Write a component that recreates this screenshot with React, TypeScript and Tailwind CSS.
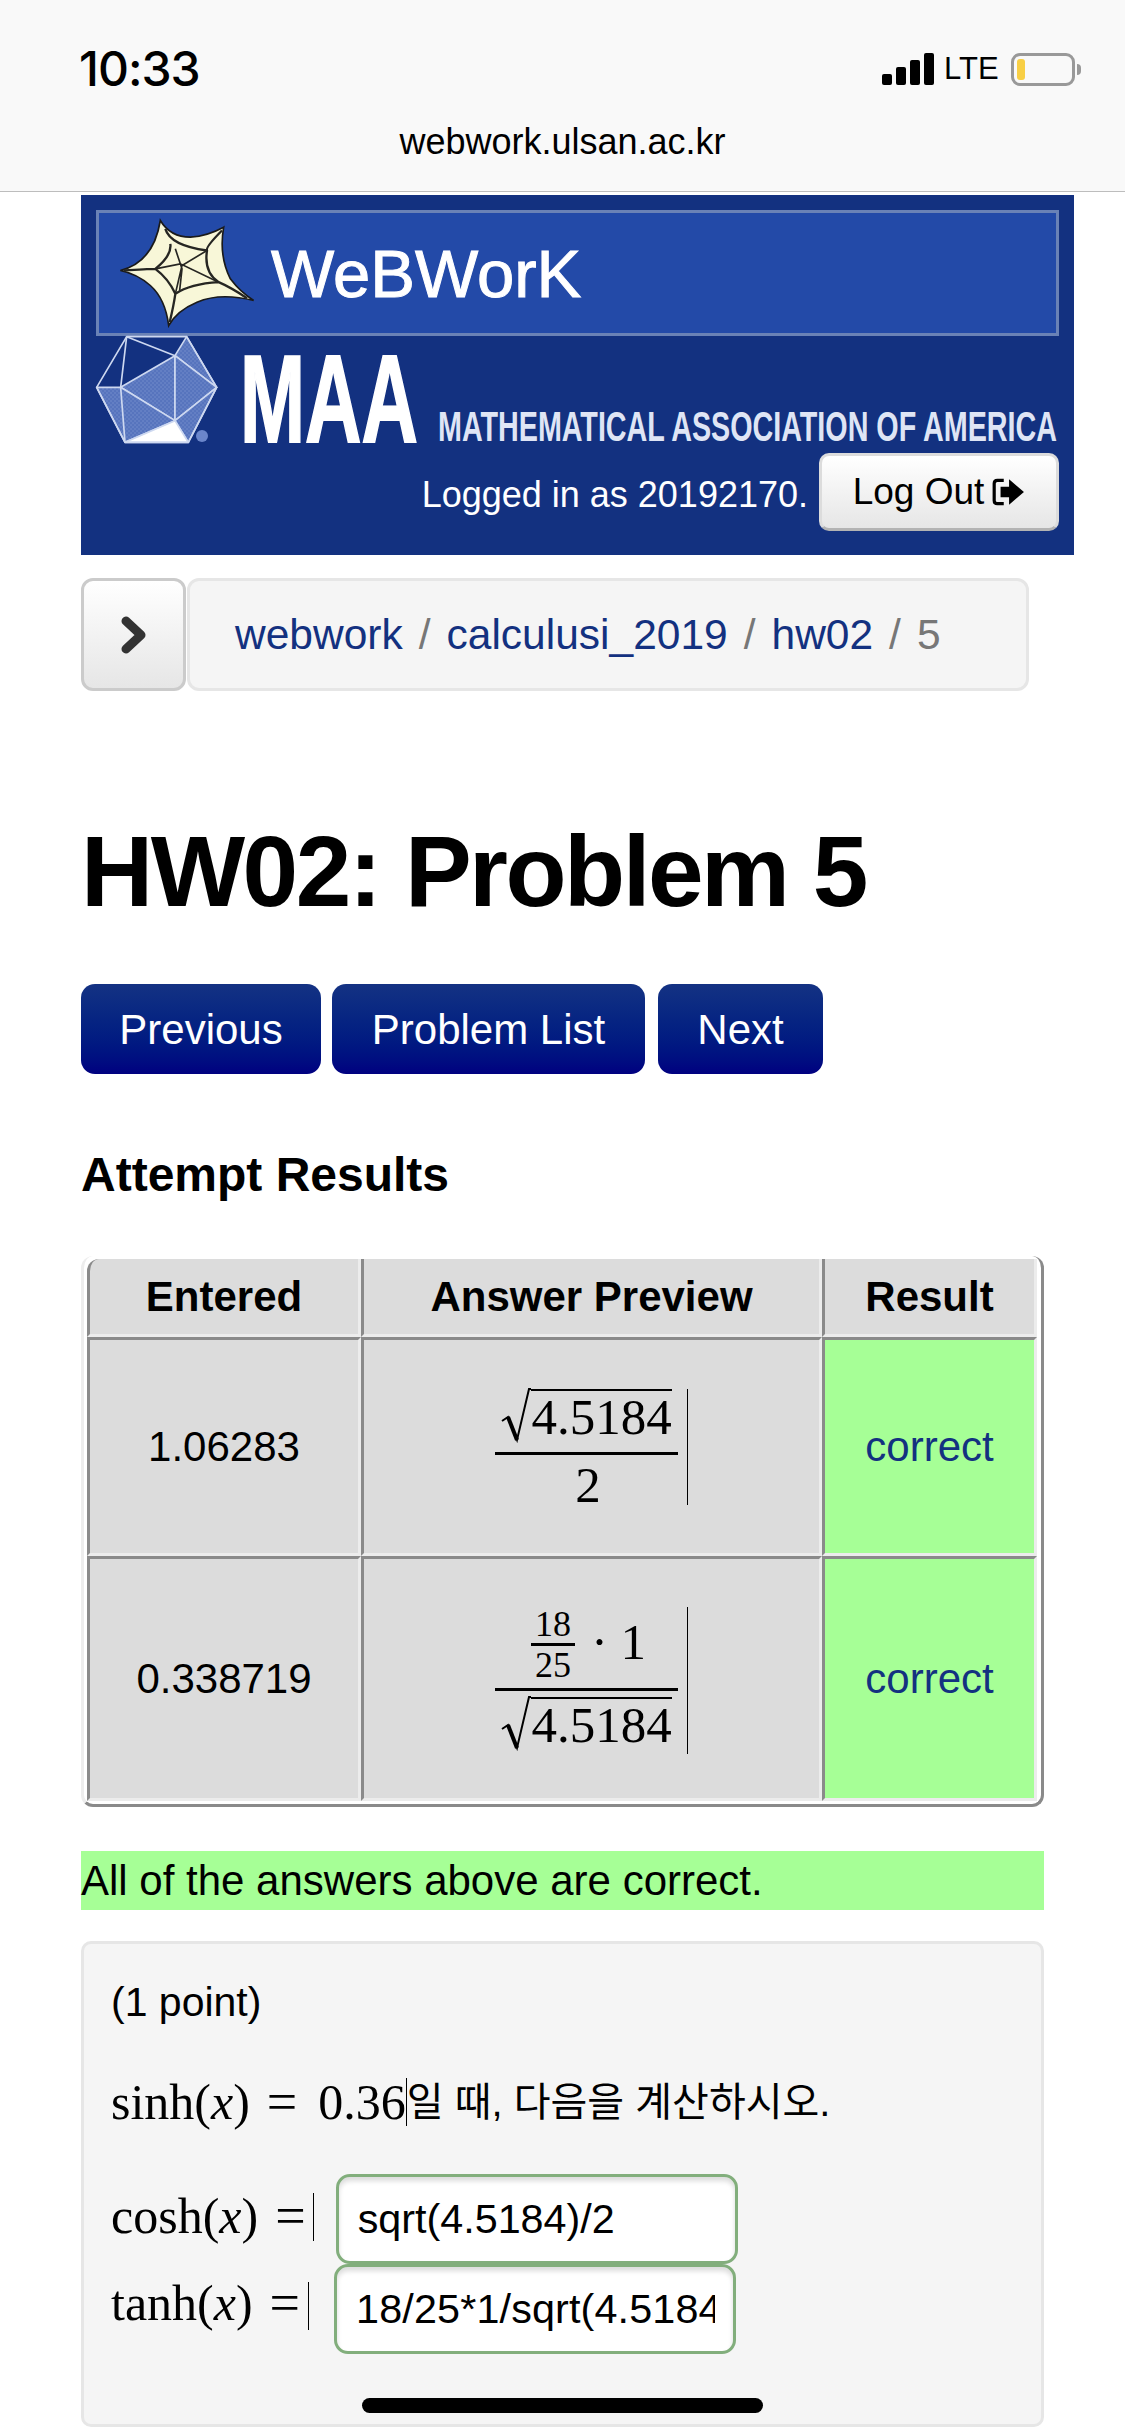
const Star = () => (
  <svg viewBox="80 15 420 335" className="h-[112px] w-[140px] shrink-0">
    <path
      d="M210 25 Q240 75 300 75 Q350 72 400 45 Q385 130 420 200 Q450 240 490 265 Q390 240 320 270 Q260 295 235 340 Q225 260 180 220 Q140 185 90 175 Q190 150 210 25 Z"
      fill="#f8f7d8"
      stroke="#1a1a1a"
      strokeWidth="5"
    />
    <g fill="none" stroke="#262622" strokeWidth="7">
      <path d="M225 50 Q240 100 350 115 M395 55 Q345 105 350 115 Q340 180 385 210 M470 258 Q420 225 385 210 Q300 215 255 245 M238 330 Q250 280 255 245 Q235 200 195 170 M100 175 Q170 170 195 170 Q245 130 240 95" />
      <path d="M255 110 L275 170 L268 235 M195 170 L270 155 L385 210 M350 115 L275 160 L255 245" strokeWidth="5" />
    </g>
  </svg>
);

const MaaLogo = () => (
  <svg viewBox="0 0 963 108" className="block h-[108px] w-[963px] overflow-visible">
    <defs>
      <pattern id="hatch" width="4" height="4" patternUnits="userSpaceOnUse">
        <rect width="4" height="4" fill="#4464b4" />
        <path d="M0 4L4 0" stroke="#a9bbe6" strokeWidth="1" />
      </pattern>
    </defs>
    <g transform="scale(0.3333)" stroke="#cdd8f0" strokeWidth="5" strokeLinejoin="round">
      <path d="M272 2 L362 154 L237 59 Z" fill="url(#hatch)" />
      <path d="M74 154 L237 59 L237 254 Z" fill="url(#hatch)" />
      <path d="M237 59 L362 154 L237 254 Z" fill="url(#hatch)" />
      <path d="M2 154 L74 154 L237 254 L87 319 Z" fill="url(#hatch)" />
      <path d="M237 254 L362 154 L277 319 Z" fill="url(#hatch)" />
      <path d="M87 319 L237 254 L277 319 Z" fill="#ffffff" />
      <path d="M92 2 L272 2 L362 154 L277 319 L87 319 L2 154 Z" fill="none" />
      <path d="M92 2 L237 59 M92 2 L74 154 M74 154 L87 319" fill="none" />
    </g>
    <circle cx="106" cy="100" r="6" fill="#6b86cb" />
    <text
      x="144"
      y="106"
      fontFamily="'Liberation Sans', sans-serif"
      fontWeight="700"
      fontSize="124"
      textLength="178"
      lengthAdjust="spacingAndGlyphs"
      fill="#ffffff"
      stroke="#ffffff"
      strokeWidth="2"
    >
      MAA
    </text>
    <text
      x="342"
      y="105"
      fontFamily="'Liberation Sans', sans-serif"
      fontWeight="700"
      fontSize="42"
      textLength="619"
      lengthAdjust="spacingAndGlyphs"
      fill="#dfe5f5"
    >
      MATHEMATICAL ASSOCIATION OF AMERICA
    </text>
  </svg>
);

const Sqrt = () => (
  <div className="flex items-start justify-center">
    <svg viewBox="0 0 30 58" className="mt-[-1px] h-[58px] w-[30px] shrink-0">
      <path d="M1 33 L7 29 L16 52 L28 1 L30 1" fill="none" stroke="#000" strokeWidth="2" />
      <path d="M7 29 L16 52" fill="none" stroke="#000" strokeWidth="4" />
    </svg>
    <span className="border-t-2 border-black text-[51px] leading-[52px]">4.5184</span>
  </div>
);

const Preview = ({ top, bottom }: { top: React.ReactNode; bottom: React.ReactNode }) => (
  <div className="flex items-center justify-center font-['Liberation_Serif',serif]">
    <div className="flex w-[183px] flex-col items-center">
      {top}
      <div className="my-[6px] h-[3px] w-full bg-black" />
      {bottom}
    </div>
    <div className="ml-[9px] w-px self-stretch bg-black" />
  </div>
);

const MathLabel = ({ name, className }: { name: string; className: string }) => (
  <span className={`flex items-center font-['Liberation_Serif',serif] text-[50px] leading-none ${className}`}>
    {name}(<i>x</i>)<span className="ml-[17px] text-[54px] leading-none">=</span>
  </span>
);

const cellBorder = "border-[3px] border-t-[#8a8a8a] border-l-[#8a8a8a] border-r-[#ececec] border-b-[#ececec]";

const ResultCell = () => (
  <div className={`flex items-center justify-center bg-[#a6ff96] text-[#133180] ${cellBorder}`}>correct</div>
);

const HomeBar = () => (
  <div className="absolute bottom-[23px] left-[362px] h-[15px] w-[401px] rounded-full bg-black" />
);

export default function App() {
  return (
    <div className="relative h-[2436px] w-[1125px] overflow-hidden bg-white font-['Liberation_Sans',sans-serif] text-black">
      {/* browser chrome */}
      <div className="h-[192px] border-b border-b-[#bdbdbd] bg-[#f9f9f9]">
        <div className="flex h-[122px] items-center justify-between pt-[16px] pr-[44px] pl-[79px]">
          <span className="font-['Inter',sans-serif] text-[48px] font-medium tracking-[-1px]">10:33</span>
          <div className="flex items-center">
            <div className="flex h-[32px] items-end gap-[4px]">
              <div className="h-[11px] w-[10px] rounded-[2px] bg-black" />
              <div className="h-[18px] w-[10px] rounded-[2px] bg-black" />
              <div className="h-[25px] w-[10px] rounded-[2px] bg-black" />
              <div className="h-[32px] w-[10px] rounded-[2px] bg-black" />
            </div>
            <span className="ml-[10px] w-[54px] text-[31px] font-normal">LTE</span>
            <div className="ml-[13px] flex h-[33px] w-[64px] items-center rounded-[9px] border-[3px] border-[#999] pl-[3px]">
              <div className="h-[21px] w-[8px] rounded-[3px] bg-[#f8cf45]" />
            </div>
            <div className="ml-[2px] h-[11px] w-[4px] rounded-r-full bg-[#999]" />
          </div>
        </div>
        <div className="text-center text-[36px] leading-[40px]">webwork.ulsan.ac.kr</div>
      </div>

      <div className="pl-[81px]">
        {/* banner */}
        <div className="mt-[3px] h-[360px] w-[993px] bg-[#133180] px-[15px] pt-[15px]">
          <div className="flex h-[126px] w-[963px] items-center border-[3px] border-[#6a82b6] bg-[#234aa8] pl-[18px]">
            <Star />
            <span className="ml-[14px] text-[67px] leading-none text-white [-webkit-text-stroke:1px_white]">WeBWorK</span>
          </div>
          <MaaLogo />
          <div className="mt-[9px] flex h-[78px] items-center justify-end">
            <span className="mt-[6px] mr-[11px] text-[36px] text-white">Logged in as 20192170.</span>
            <div className="flex h-[78px] w-[240px] items-center justify-center gap-[7px] rounded-[10px] border-[3px] border-[#dcdcdc] border-b-[#b3b3b3] bg-gradient-to-b from-white to-[#e6e6e6] text-[37px]">
              Log Out
              <svg viewBox="0 0 32 28" className="h-[30px] w-[34px]">
                <path d="M12 3H6Q3 3 3 6V22Q3 25 6 25H12" fill="none" stroke="#000" strokeWidth="3" />
                <path d="M9 9H17V2L31 14L17 26V19H9Z" fill="#000" />
              </svg>
            </div>
          </div>
        </div>

        {/* breadcrumb */}
        <div className="mt-[23px] flex h-[113px]">
          <div className="flex w-[105px] items-center justify-center rounded-[12px] border-[3px] border-[#cbcbcb] bg-gradient-to-b from-white to-[#e6e6e6]">
            <svg viewBox="0 0 26 38" className="h-[38px] w-[26px]">
              <path d="M5 5L20 19L5 33" fill="none" stroke="#333" strokeWidth="9" strokeLinejoin="round" strokeLinecap="round" />
            </svg>
          </div>
          <div className="ml-[1px] flex w-[842px] items-center rounded-[12px] border-[3px] border-[#e6e6e6] bg-[#f5f5f5] pl-[45px] text-[42.5px]">
            <span className="text-[#133180]">webwork</span>
            <span className="mx-[16px] text-[#777]">/</span>
            <span className="text-[#133180]">calculusi_2019</span>
            <span className="mx-[16px] text-[#777]">/</span>
            <span className="text-[#133180]">hw02</span>
            <span className="mx-[16px] text-[#777]">/</span>
            <span className="text-[#777]">5</span>
          </div>
        </div>

        <h1 className="mt-[125px] text-[100px] leading-[110px] font-bold tracking-[-2.5px]">HW02: Problem 5</h1>

        {/* nav buttons */}
        <div className="mt-[58px] flex h-[90px] text-[42px] text-white">
          <div className="flex w-[240px] items-center justify-center rounded-[14px] bg-gradient-to-b from-[#143283] to-[#000080]">Previous</div>
          <div className="ml-[11px] flex w-[313px] items-center justify-center rounded-[14px] bg-gradient-to-b from-[#143283] to-[#000080]">Problem List</div>
          <div className="ml-[13px] flex w-[165px] items-center justify-center rounded-[14px] bg-gradient-to-b from-[#143283] to-[#000080]">Next</div>
        </div>

        <h2 className="mt-[75px] text-[48px] leading-[52px] font-bold">Attempt Results</h2>

        {/* results table */}
        <div className="mt-[55px] w-[963px] rounded-[12px] border-[3px] border-t-0 border-l-[#ededed] border-r-[#8a8a8a] border-b-[#8a8a8a] pt-[3px] pr-[4px] pb-[3px] pl-[3px]">
          <div className="grid grid-cols-[274px_461px_1fr] grid-rows-[78px_219px_245px] text-center text-[42px]">
            <div className={`flex items-center justify-center rounded-tl-[12px] border-t-0 bg-[#dcdcdc] font-bold ${cellBorder}`}>Entered</div>
            <div className={`flex items-center justify-center border-t-0 bg-[#dcdcdc] font-bold ${cellBorder}`}>Answer Preview</div>
            <div className={`flex items-center justify-center border-t-0 bg-[#dcdcdc] font-bold ${cellBorder}`}>Result</div>

            <div className={`flex items-center justify-center bg-[#dcdcdc] ${cellBorder}`}>1.06283</div>
            <div className={`flex items-center justify-center bg-[#dcdcdc] ${cellBorder}`}>
              <Preview top={<Sqrt />} bottom={<span className="mt-[4px] ml-[3px] text-[51px] leading-[40px]">2</span>} />
            </div>
            <ResultCell />

            <div className={`flex items-center justify-center bg-[#dcdcdc] ${cellBorder}`}>0.338719</div>
            <div className={`flex items-center justify-center bg-[#dcdcdc] pt-[4px] ${cellBorder}`}>
              <Preview
                top={
                  <div className="flex items-center pl-[4px]">
                    <div className="flex w-[44px] flex-col items-center text-[36px] leading-[34px]">
                      <span>18</span>
                      <div className="my-[2px] h-[3px] w-full bg-black" />
                      <span>25</span>
                    </div>
                    <span className="mb-[4px] ml-[16px] text-[51px] leading-none">· 1</span>
                  </div>
                }
                bottom={<Sqrt />}
              />
            </div>
            <ResultCell />
          </div>
        </div>

        <div className="mt-[44px] h-[59px] w-[963px] bg-[#a6ff96] text-[42px] leading-[59px]">
          All of the answers above are correct.
        </div>

        {/* problem */}
        <div className="mt-[31px] h-[486px] w-[963px] rounded-[10px] border-[3px] border-[#e6e6e6] bg-[#f5f5f5] pt-[36px] pl-[27px]">
          <div className="text-[41px] leading-[44px]">(1 point)</div>
          <div className="mt-[48px] flex h-[60px] items-center text-[40px]">
            <span className="flex items-center font-['Liberation_Serif',serif] text-[50px] leading-none">
              sinh(<i>x</i>)<span className="mr-[21px] ml-[17px] text-[54px] leading-none">=</span>0.36
            </span>
            <span className="h-[48px] w-px bg-black" />
            <span className="font-['Liberation_Sans','Noto_Sans_CJK_KR',sans-serif]">일 때, 다음을 계산하시오.</span>
          </div>
          <div className="mt-[42px] flex h-[90px] items-center">
            <MathLabel name="cosh" className="mb-[6px]" />
            <span className="mb-[4px] ml-[7px] h-[48px] w-px bg-black" />
            <input
              readOnly
              value="sqrt(4.5184)/2"
              className="ml-[22px] h-[90px] w-[402px] rounded-[14px] border-[3px] border-[#82ae7c] bg-white pr-[20px] pl-[19px] text-[41.3px] shadow-[inset_0_4px_5px_rgba(0,0,0,0.14)] outline-none"
            />
          </div>
          <div className="flex h-[90px] items-center">
            <MathLabel name="tanh" className="mb-[12px]" />
            <span className="mb-[6px] ml-[8px] h-[48px] w-px bg-black" />
            <input
              readOnly
              value="18/25*1/sqrt(4.5184)"
              className="ml-[25px] h-[90px] w-[402px] rounded-[14px] border-[3px] border-[#82ae7c] bg-white pr-[18px] pl-[19px] text-[41.3px] tracking-[0.15px] shadow-[inset_0_4px_5px_rgba(0,0,0,0.14)] outline-none"
            />
          </div>
        </div>
      </div>
      <HomeBar />
    </div>
  );
}
